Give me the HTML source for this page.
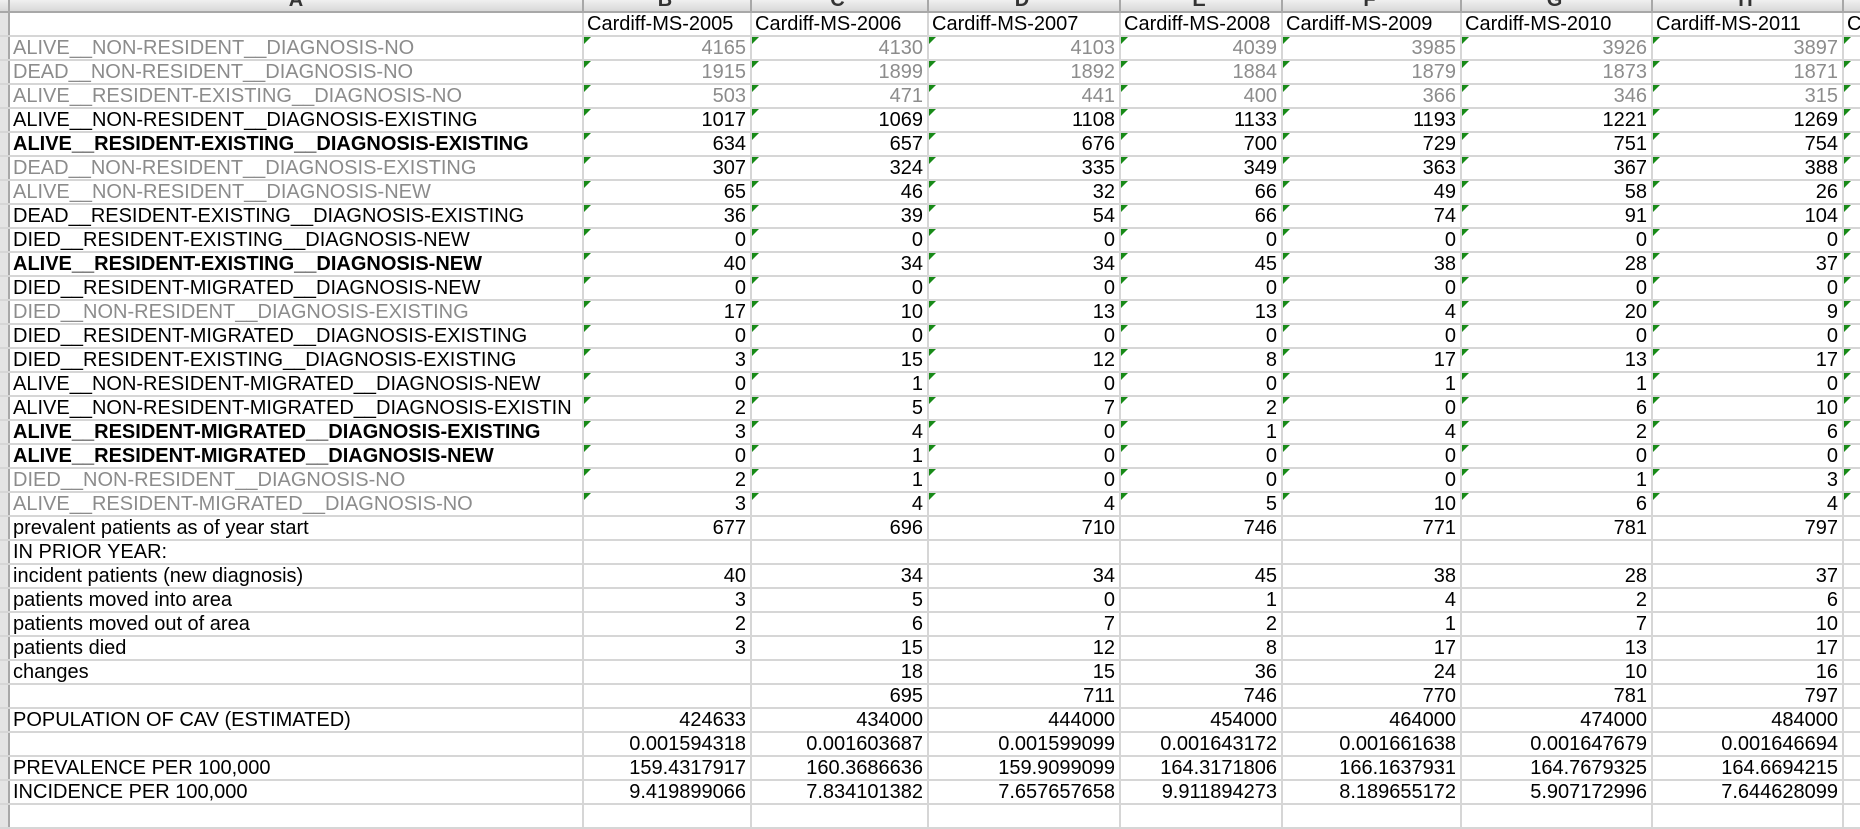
<!DOCTYPE html>
<html><head><meta charset="utf-8"><style>
*{margin:0;padding:0;box-sizing:border-box}
body{width:1860px;height:816px;overflow:hidden;background:#fff;font-family:"Liberation Sans",Arial,sans-serif;font-size:20px;letter-spacing:0;color:#000}
.r{display:flex;height:24px;border-bottom:2px solid #d6d6d6}
.r>div{flex:none;border-right:2px solid #d6d6d6;height:22px;line-height:23px;white-space:nowrap;overflow:hidden;position:relative}
.r>div:nth-child(1){width:10px;background:#e4e4e4;border-right:2px solid #a8a8a8}
.r>div:nth-child(2){width:574px;padding-left:3px;overflow:visible;z-index:1}
.r>div:nth-child(3){width:168px}
.r>div:nth-child(4){width:177px}
.r>div:nth-child(5){width:192px}
.r>div:nth-child(6){width:162px}
.r>div:nth-child(7){width:179px}
.r>div:nth-child(8){width:191px}
.r>div:nth-child(9){width:191px}
.r>div:nth-child(10){width:20px}
.r>div:nth-child(n+3){text-align:right;padding-right:4px;background:#fff}
.h{height:13px;background:linear-gradient(#f0f0f0,#d8d8d8);border-bottom:2px solid #a8a8a8}
.h>div{height:11px;line-height:0px;text-align:center !important;font-weight:bold;color:#333;background:transparent !important;border-right:2px solid #a8a8a8 !important}
.r.t1>div:nth-child(n+3){text-align:left;padding-left:3px}
.g{color:#8c8c8c}
.b>div:nth-child(2){font-weight:bold}
.tr>div:nth-child(n+3)::before{content:"";position:absolute;left:0;top:0;border-top:7px solid #178a17;border-right:7px solid transparent}
</style></head><body>
<div class="r h"><div></div><div style="padding-left:0">A</div><div>B</div><div>C</div><div>D</div><div>E</div><div>F</div><div>G</div><div>H</div><div></div></div>
<div class="r t1"><div></div><div></div><div>Cardiff-MS-2005</div><div>Cardiff-MS-2006</div><div>Cardiff-MS-2007</div><div>Cardiff-MS-2008</div><div>Cardiff-MS-2009</div><div>Cardiff-MS-2010</div><div>Cardiff-MS-2011</div><div>C</div></div>
<div class="r tr g"><div></div><div>ALIVE__NON-RESIDENT__DIAGNOSIS-NO</div><div>4165</div><div>4130</div><div>4103</div><div>4039</div><div>3985</div><div>3926</div><div>3897</div><div></div></div>
<div class="r tr g"><div></div><div>DEAD__NON-RESIDENT__DIAGNOSIS-NO</div><div>1915</div><div>1899</div><div>1892</div><div>1884</div><div>1879</div><div>1873</div><div>1871</div><div></div></div>
<div class="r tr g"><div></div><div>ALIVE__RESIDENT-EXISTING__DIAGNOSIS-NO</div><div>503</div><div>471</div><div>441</div><div>400</div><div>366</div><div>346</div><div>315</div><div></div></div>
<div class="r tr"><div></div><div>ALIVE__NON-RESIDENT__DIAGNOSIS-EXISTING</div><div>1017</div><div>1069</div><div>1108</div><div>1133</div><div>1193</div><div>1221</div><div>1269</div><div></div></div>
<div class="r tr b"><div></div><div>ALIVE__RESIDENT-EXISTING__DIAGNOSIS-EXISTING</div><div>634</div><div>657</div><div>676</div><div>700</div><div>729</div><div>751</div><div>754</div><div></div></div>
<div class="r tr"><div></div><div class="g">DEAD__NON-RESIDENT__DIAGNOSIS-EXISTING</div><div>307</div><div>324</div><div>335</div><div>349</div><div>363</div><div>367</div><div>388</div><div></div></div>
<div class="r tr"><div></div><div class="g">ALIVE__NON-RESIDENT__DIAGNOSIS-NEW</div><div>65</div><div>46</div><div>32</div><div>66</div><div>49</div><div>58</div><div>26</div><div></div></div>
<div class="r tr"><div></div><div>DEAD__RESIDENT-EXISTING__DIAGNOSIS-EXISTING</div><div>36</div><div>39</div><div>54</div><div>66</div><div>74</div><div>91</div><div>104</div><div></div></div>
<div class="r tr"><div></div><div>DIED__RESIDENT-EXISTING__DIAGNOSIS-NEW</div><div>0</div><div>0</div><div>0</div><div>0</div><div>0</div><div>0</div><div>0</div><div></div></div>
<div class="r tr b"><div></div><div>ALIVE__RESIDENT-EXISTING__DIAGNOSIS-NEW</div><div>40</div><div>34</div><div>34</div><div>45</div><div>38</div><div>28</div><div>37</div><div></div></div>
<div class="r tr"><div></div><div>DIED__RESIDENT-MIGRATED__DIAGNOSIS-NEW</div><div>0</div><div>0</div><div>0</div><div>0</div><div>0</div><div>0</div><div>0</div><div></div></div>
<div class="r tr"><div></div><div class="g">DIED__NON-RESIDENT__DIAGNOSIS-EXISTING</div><div>17</div><div>10</div><div>13</div><div>13</div><div>4</div><div>20</div><div>9</div><div></div></div>
<div class="r tr"><div></div><div>DIED__RESIDENT-MIGRATED__DIAGNOSIS-EXISTING</div><div>0</div><div>0</div><div>0</div><div>0</div><div>0</div><div>0</div><div>0</div><div></div></div>
<div class="r tr"><div></div><div>DIED__RESIDENT-EXISTING__DIAGNOSIS-EXISTING</div><div>3</div><div>15</div><div>12</div><div>8</div><div>17</div><div>13</div><div>17</div><div></div></div>
<div class="r tr"><div></div><div>ALIVE__NON-RESIDENT-MIGRATED__DIAGNOSIS-NEW</div><div>0</div><div>1</div><div>0</div><div>0</div><div>1</div><div>1</div><div>0</div><div></div></div>
<div class="r tr"><div></div><div style="overflow:hidden">ALIVE__NON-RESIDENT-MIGRATED__DIAGNOSIS-EXISTIN</div><div>2</div><div>5</div><div>7</div><div>2</div><div>0</div><div>6</div><div>10</div><div></div></div>
<div class="r tr b"><div></div><div>ALIVE__RESIDENT-MIGRATED__DIAGNOSIS-EXISTING</div><div>3</div><div>4</div><div>0</div><div>1</div><div>4</div><div>2</div><div>6</div><div></div></div>
<div class="r tr b"><div></div><div>ALIVE__RESIDENT-MIGRATED__DIAGNOSIS-NEW</div><div>0</div><div>1</div><div>0</div><div>0</div><div>0</div><div>0</div><div>0</div><div></div></div>
<div class="r tr"><div></div><div class="g">DIED__NON-RESIDENT__DIAGNOSIS-NO</div><div>2</div><div>1</div><div>0</div><div>0</div><div>0</div><div>1</div><div>3</div><div></div></div>
<div class="r tr"><div></div><div class="g">ALIVE__RESIDENT-MIGRATED__DIAGNOSIS-NO</div><div>3</div><div>4</div><div>4</div><div>5</div><div>10</div><div>6</div><div>4</div><div></div></div>
<div class="r"><div></div><div>prevalent patients as of year start</div><div>677</div><div>696</div><div>710</div><div>746</div><div>771</div><div>781</div><div>797</div><div></div></div>
<div class="r"><div></div><div>IN PRIOR YEAR:</div><div></div><div></div><div></div><div></div><div></div><div></div><div></div><div></div></div>
<div class="r"><div></div><div>incident patients (new diagnosis)</div><div>40</div><div>34</div><div>34</div><div>45</div><div>38</div><div>28</div><div>37</div><div></div></div>
<div class="r"><div></div><div>patients moved into area</div><div>3</div><div>5</div><div>0</div><div>1</div><div>4</div><div>2</div><div>6</div><div></div></div>
<div class="r"><div></div><div>patients moved out of area</div><div>2</div><div>6</div><div>7</div><div>2</div><div>1</div><div>7</div><div>10</div><div></div></div>
<div class="r"><div></div><div>patients died</div><div>3</div><div>15</div><div>12</div><div>8</div><div>17</div><div>13</div><div>17</div><div></div></div>
<div class="r"><div></div><div>changes</div><div></div><div>18</div><div>15</div><div>36</div><div>24</div><div>10</div><div>16</div><div></div></div>
<div class="r"><div></div><div></div><div></div><div>695</div><div>711</div><div>746</div><div>770</div><div>781</div><div>797</div><div></div></div>
<div class="r"><div></div><div>POPULATION OF CAV (ESTIMATED)</div><div>424633</div><div>434000</div><div>444000</div><div>454000</div><div>464000</div><div>474000</div><div>484000</div><div></div></div>
<div class="r"><div></div><div></div><div>0.001594318</div><div>0.001603687</div><div>0.001599099</div><div>0.001643172</div><div>0.001661638</div><div>0.001647679</div><div>0.001646694</div><div></div></div>
<div class="r"><div></div><div>PREVALENCE PER 100,000</div><div>159.4317917</div><div>160.3686636</div><div>159.9099099</div><div>164.3171806</div><div>166.1637931</div><div>164.7679325</div><div>164.6694215</div><div></div></div>
<div class="r"><div></div><div>INCIDENCE PER 100,000</div><div>9.419899066</div><div>7.834101382</div><div>7.657657658</div><div>9.911894273</div><div>8.189655172</div><div>5.907172996</div><div>7.644628099</div><div></div></div>
<div class="r"><div></div><div></div><div></div><div></div><div></div><div></div><div></div><div></div><div></div><div></div></div>
</body></html>
